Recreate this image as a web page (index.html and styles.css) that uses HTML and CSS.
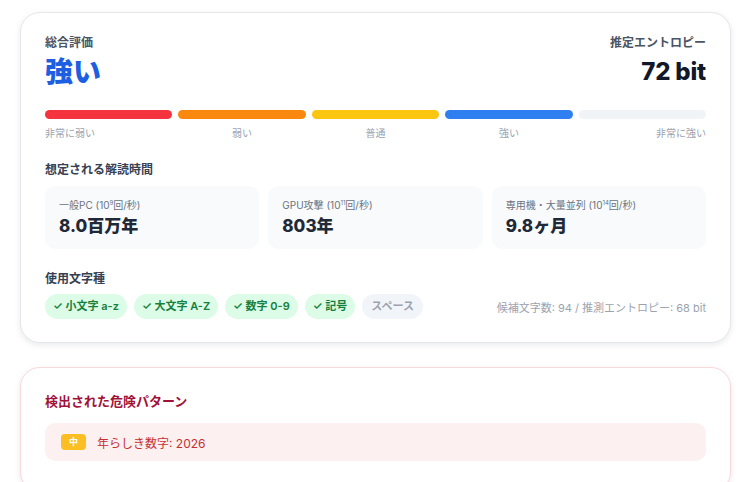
FILE: index.html
```html
<!DOCTYPE html>
<html lang="ja">
<head>
  <meta charset="UTF-8">
  <meta name="viewport" content="width=device-width, initial-scale=1.0">
  <title>パスワード強度</title>
  <link rel="stylesheet" href="styles.css">
</head>
<body>
  <div class="page">
    <section class="card result-card">
      <div class="summary">
        <div>
          <div class="label">総合評価</div>
          <div class="rating">強い</div>
        </div>
        <div class="entropy">
          <div class="label">推定エントロピー</div>
          <div class="bits">72 bit</div>
        </div>
      </div>

      <div class="meter">
        <span class="seg seg-1"></span>
        <span class="seg seg-2"></span>
        <span class="seg seg-3"></span>
        <span class="seg seg-4"></span>
        <span class="seg seg-5"></span>
      </div>
      <div class="meter-labels">
        <span>非常に弱い</span>
        <span>弱い</span>
        <span>普通</span>
        <span>強い</span>
        <span>非常に強い</span>
      </div>

      <h3 class="section-title">想定される解読時間</h3>
      <div class="crack-grid">
        <div class="tile">
          <div class="tile-label">一般PC (10<sup>9</sup>回/秒)</div>
          <div class="tile-value">8.0百万年</div>
        </div>
        <div class="tile">
          <div class="tile-label">GPU攻撃 (10<sup>11</sup>回/秒)</div>
          <div class="tile-value">803年</div>
        </div>
        <div class="tile">
          <div class="tile-label">専用機・大量並列 (10<sup>14</sup>回/秒)</div>
          <div class="tile-value">9.8ヶ月</div>
        </div>
      </div>

      <h3 class="section-title">使用文字種</h3>
      <div class="charset-row">
        <div class="chips">
          <span class="chip on">✓ 小文字 a-z</span>
          <span class="chip on">✓ 大文字 A-Z</span>
          <span class="chip on">✓ 数字 0-9</span>
          <span class="chip on">✓ 記号</span>
          <span class="chip off">スペース</span>
        </div>
        <div class="charset-note">候補文字数: 94 / 推測エントロピー: 68 bit</div>
      </div>
    </section>

    <section class="card danger-card">
      <h3 class="danger-title">検出された危険パターン</h3>
      <div class="pattern">
        <span class="badge">中</span>
        <span class="pattern-text">年らしき数字: 2026</span>
      </div>
    </section>
  </div>
</body>
</html>
```

FILE: styles.css
```css
body {
  margin: 0;
  background: #ffffff;
  font-family: Inter, "Noto Sans CJK JP", sans-serif;
  color: #111827;
}

.page {
  padding: 12px 19px 0 20px;
}

.card {
  background: white;
  border: 1px solid #e5e7eb;
  border-radius: 20px;
  padding: 22px 24px 23px;
  box-shadow: 0 2px 6px rgba(15, 23, 42, 0.09);
}

.danger-card {
  margin-top: 24px;
  border-color: #f8d9dc;
  padding-top: 24px;
  padding-bottom: 30px;
}

.summary {
  display: flex;
  justify-content: space-between;
  align-items: flex-start;
}

.label {
  font-size: 12px;
  line-height: 16px;
  font-weight: 600;
  color: #4b5563;
}

.rating {
  margin-top: 3px;
  font-size: 28px;
  line-height: 36px;
  font-weight: 800;
  color: #1d5fe0;
}

.entropy {
  text-align: right;
}

.bits {
  margin-top: 5px;
  font-size: 24px;
  line-height: 32px;
  font-weight: 800;
  color: #111827;
  letter-spacing: -0.2px;
}

.meter {
  display: grid;
  grid-template-columns: repeat(5, 1fr);
  gap: 6px;
  margin-top: 20px;
}

.seg {
  height: 9px;
  border-radius: 5px;
}

.seg-1 { background: #f5333f; }
.seg-2 { background: #fa870e; }
.seg-3 { background: #fbc60f; }
.seg-4 { background: #2f7ff0; }
.seg-5 { background: #f1f4f7; }

.meter-labels {
  display: grid;
  grid-template-columns: repeat(5, 1fr);
  gap: 6px;
  margin-top: 7px;
  font-size: 10px;
  line-height: 14px;
  color: #9ca3af;
  text-align: center;
}

.meter-labels span:first-child { text-align: left; }
.meter-labels span:last-child { text-align: right; }

.section-title {
  margin: 22px 0 8px;
  font-size: 12px;
  line-height: 16px;
  font-weight: 700;
  color: #374151;
}

.crack-grid {
  display: grid;
  grid-template-columns: repeat(3, 1fr);
  gap: 9px;
}

.tile {
  background: #f8fafc;
  border-radius: 10px;
  padding: 12px 14px 12px;
}

.tile-label {
  font-size: 10px;
  line-height: 14px;
  color: #6b7280;
}

.tile-label sup {
  font-size: 6px;
  line-height: 0;
}

.tile-value {
  margin-top: 3px;
  font-size: 17px;
  line-height: 22px;
  font-weight: 800;
  color: #1f2937;
}

.charset-row {
  display: flex;
  justify-content: space-between;
  align-items: center;
  margin-top: -1px;
}

.chips {
  display: flex;
  gap: 7px;
}

.chip {
  height: 25px;
  line-height: 25px;
  padding: 0 8px;
  border-radius: 13px;
  font-size: 11px;
  font-weight: 600;
}

.chip.on {
  background: #dcfce7;
  color: #15803d;
}

.chip.off {
  background: #f1f5f9;
  color: #9ca3af;
  padding: 0 9px;
}

.charset-note {
  font-size: 11px;
  color: #9ca3af;
}

.danger-title {
  margin: 0;
  font-size: 13px;
  line-height: 18px;
  font-weight: 700;
  color: #9f1239;
}

.pattern {
  display: flex;
  align-items: center;
  gap: 11px;
  margin-top: 13px;
  height: 38px;
  padding: 0 16px;
  background: #fdf0f1;
  border-radius: 10px;
}

.badge {
  width: 25px;
  height: 16px;
  line-height: 16px;
  text-align: center;
  background: #fbbf24;
  color: white;
  font-size: 9px;
  font-weight: 700;
  border-radius: 4px;
}

.pattern-text {
  font-size: 12px;
  color: #c53030;
}
```
